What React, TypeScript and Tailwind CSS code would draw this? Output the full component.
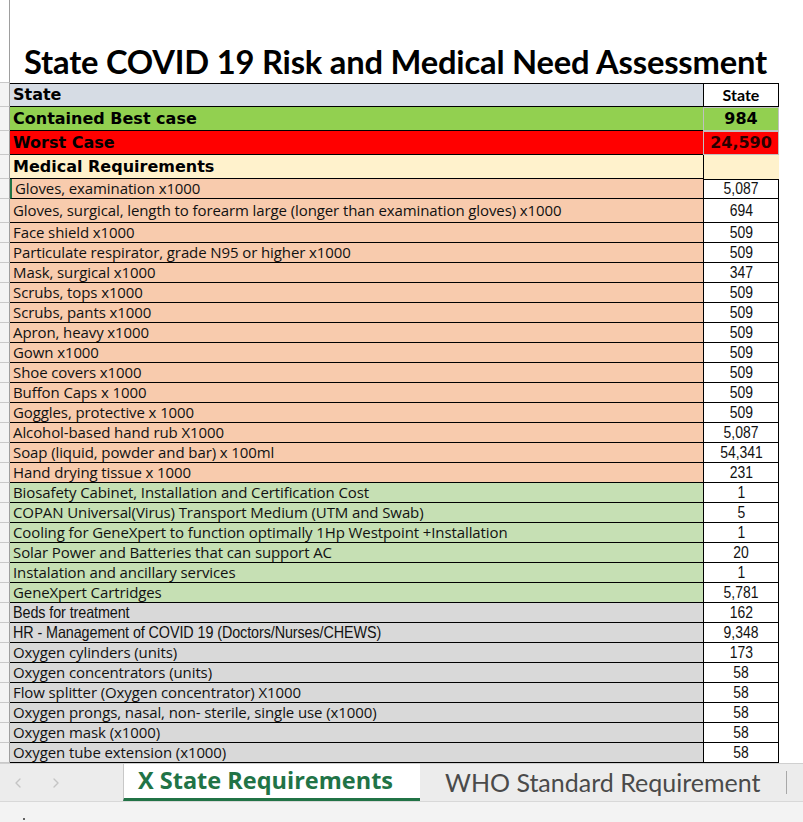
import { FiChevronLeft, FiChevronRight } from 'react-icons/fi'

type Row = { label: string; value: string; tone: 'peach' | 'green' | 'gray'; narrow?: boolean; tall?: boolean }

const rows: Row[] = [
  { label: 'Gloves, examination x1000', value: '5,087', tone: 'peach' },
  { label: 'Gloves, surgical, length to forearm large (longer than examination gloves) x1000', value: '694', tone: 'peach', tall: true },
  { label: 'Face shield x1000', value: '509', tone: 'peach' },
  { label: 'Particulate respirator, grade N95 or higher x1000', value: '509', tone: 'peach' },
  { label: 'Mask, surgical x1000', value: '347', tone: 'peach' },
  { label: 'Scrubs, tops x1000', value: '509', tone: 'peach' },
  { label: 'Scrubs, pants x1000', value: '509', tone: 'peach' },
  { label: 'Apron, heavy x1000', value: '509', tone: 'peach' },
  { label: 'Gown x1000', value: '509', tone: 'peach' },
  { label: 'Shoe covers x1000', value: '509', tone: 'peach' },
  { label: 'Buffon Caps x 1000', value: '509', tone: 'peach' },
  { label: 'Goggles, protective x 1000', value: '509', tone: 'peach' },
  { label: 'Alcohol-based hand rub X1000', value: '5,087', tone: 'peach' },
  { label: 'Soap (liquid, powder and bar) x 100ml', value: '54,341', tone: 'peach' },
  { label: 'Hand drying tissue x 1000', value: '231', tone: 'peach' },
  { label: 'Biosafety Cabinet, Installation and Certification Cost', value: '1', tone: 'green' },
  { label: 'COPAN Universal(Virus) Transport Medium (UTM and Swab)', value: '5', tone: 'green' },
  { label: 'Cooling for GeneXpert to function optimally 1Hp Westpoint +Installation', value: '1', tone: 'green' },
  { label: 'Solar Power and Batteries that can support AC', value: '20', tone: 'green' },
  { label: 'Instalation and ancillary services', value: '1', tone: 'green' },
  { label: 'GeneXpert Cartridges', value: '5,781', tone: 'green' },
  { label: 'Beds for treatment', value: '162', tone: 'gray', narrow: true },
  { label: 'HR - Management of COVID 19 (Doctors/Nurses/CHEWS)', value: '9,348', tone: 'gray', narrow: true },
  { label: 'Oxygen cylinders (units)', value: '173', tone: 'gray' },
  { label: 'Oxygen concentrators (units)', value: '58', tone: 'gray' },
  { label: 'Flow splitter (Oxygen concentrator) X1000', value: '58', tone: 'gray' },
  { label: 'Oxygen prongs, nasal, non- sterile, single use (x1000)', value: '58', tone: 'gray' },
  { label: 'Oxygen mask (x1000)', value: '58', tone: 'gray' },
  { label: 'Oxygen tube extension (x1000)', value: '58', tone: 'gray' },
]

const toneBg = { peach: 'bg-[#f8cbad]', green: 'bg-[#c6e0b4]', gray: 'bg-[#d9d9d9]' }

const calibri = "font-['Lato','Open_Sans',sans-serif]"
const body = "font-['Open_Sans','Lato',sans-serif]"
const arial = "font-['Liberation_Sans','Arial',sans-serif]"
const tahoma = "font-['DejaVu_Sans','Verdana',sans-serif]"

// Arial Narrow isn't installed; squeeze Liberation Sans instead
function Narrow({ children, origin = 'origin-center' }: { children: string; origin?: string }) {
  return <span className={`inline-block ${arial} scale-x-[0.87] ${origin} whitespace-nowrap`}>{children}</span>
}

function Gutter() {
  return <div className="bg-[#f3f3f3] border-r border-[#9e9e9e] border-b border-b-[#c8c8c8]" />
}

function HeadRow({ label, value, bg, valueBg, valueText }: { label: string; value: string; bg: string; valueBg: string; valueText?: string }) {
  return (
    <div className="grid grid-cols-[10px_693px_76px_1fr] h-[24px]">
      <Gutter />
      <div className={`${bg} ${tahoma} border-b border-black flex items-center pl-[3px] text-[16px] font-bold text-black leading-none`}>
        {label}
      </div>
      <div className={`${valueBg} ${tahoma} flex items-center justify-center text-[16px] font-bold leading-none ${valueText ?? ''}`}>
        {value}
      </div>
      <div />
    </div>
  )
}

export default function App() {
  return (
    <div className="w-[803px] h-[822px] bg-white flex flex-col overflow-hidden">
      <div className="flex-1 min-h-0 overflow-hidden">
        {/* title */}
        <div className="grid grid-cols-[10px_1fr] h-[83px]">
          <div className="bg-white border-r border-[#9e9e9e] border-b border-b-[#c8c8c8]" />
          <div className={`${calibri} flex items-end pb-[4px] pl-[14px] text-[32.7px] font-bold text-black leading-none tracking-[-0.2px] whitespace-nowrap`}>
            State COVID 19 Risk and Medical Need Assessment
          </div>
        </div>

        {/* column header */}
        <div className="grid grid-cols-[10px_693px_76px_1fr] h-[24px]">
          <Gutter />
          <div className={`bg-[#d6dce4] ${tahoma} border-t border-b border-black flex items-center pl-[3px] text-[16px] font-bold leading-none`}>
            State
          </div>
          <div className={`bg-white ${calibri} border border-black flex items-center justify-center text-[16px] font-bold leading-none`}>
            State
          </div>
          <div />
        </div>
        <HeadRow label="Contained Best case" value="984" bg="bg-[#92d050]" valueBg="bg-[#92d050] border border-[#c0c0c0]" />
        <HeadRow label="Worst Case" value="24,590" bg="bg-[#ff0000]" valueBg="bg-[#ff0000] border border-[#c0c0c0]" valueText="text-[#2a0000]" />
        <div className="grid grid-cols-[10px_693px_76px_1fr] h-[24px]">
          <Gutter />
          <div className={`bg-[#fff2cc] ${tahoma} border-b border-black flex items-center pl-[3px] text-[16px] font-bold leading-none`}>
            Medical Requirements
          </div>
          <div className="bg-[#fff2cc] border-l border-black" />
          <div />
        </div>

        {/* items */}
        {rows.map((r, i) => (
          <div key={r.label} className={`grid grid-cols-[10px_693px_76px_1fr] ${r.tall ? 'h-[24px]' : 'h-[20px]'}`}>
            <Gutter />
            <div
              className={`${toneBg[r.tone]} ${body} text-[15px] tracking-[-0.1px] border-b border-black flex items-center pl-[3px] text-[#111] leading-none whitespace-nowrap overflow-hidden ${i === 0 ? 'border-l-2 border-l-[#217346]' : ''}`}
            >
              {r.narrow ? (
                <span className="text-[16.5px]">
                  <Narrow origin="origin-left">{r.label}</Narrow>
                </span>
              ) : (
                r.label
              )}
            </div>
            <div className={`bg-white border-l border-r border-b border-black ${i === 0 ? 'border-t' : ''} flex items-center justify-center text-[16px] text-[#111] leading-none`}>
              <Narrow>{r.value}</Narrow>
            </div>
            <div />
          </div>
        ))}
      </div>

      {/* sheet tabs */}
      <div className="h-[38px] flex bg-[#ececec] border-t border-[#d0d0d0] shrink-0">
        <div className="w-[123px] flex items-center gap-[22px] pl-[10px] text-[#c4c4c4]">
          <FiChevronLeft size={16} />
          <FiChevronRight size={16} />
        </div>
        <div className={`w-[297px] bg-white border-l border-[#c8c8c8] border-b-[3px] border-b-[#217346] flex items-center pl-[14px] ${body} text-[23.5px] font-bold text-[#217346] leading-none whitespace-nowrap`}>
          X State Requirements
        </div>
        <div className={`w-[366px] flex items-center pl-[25px] ${calibri} text-[25px] text-[#4a4a4a] leading-none whitespace-nowrap`}>
          WHO Standard Requirement
        </div>
        <div className="w-px my-[7px] bg-[#a8a8a8]" />
      </div>
      <div className="h-[21px] bg-[#f3f3f3] border-t border-[#d8d8d8] shrink-0 relative">
        <span className="absolute left-[23px] bottom-[2px] w-[2px] h-[2px] bg-[#333] rounded-full" />
      </div>
    </div>
  )
}
